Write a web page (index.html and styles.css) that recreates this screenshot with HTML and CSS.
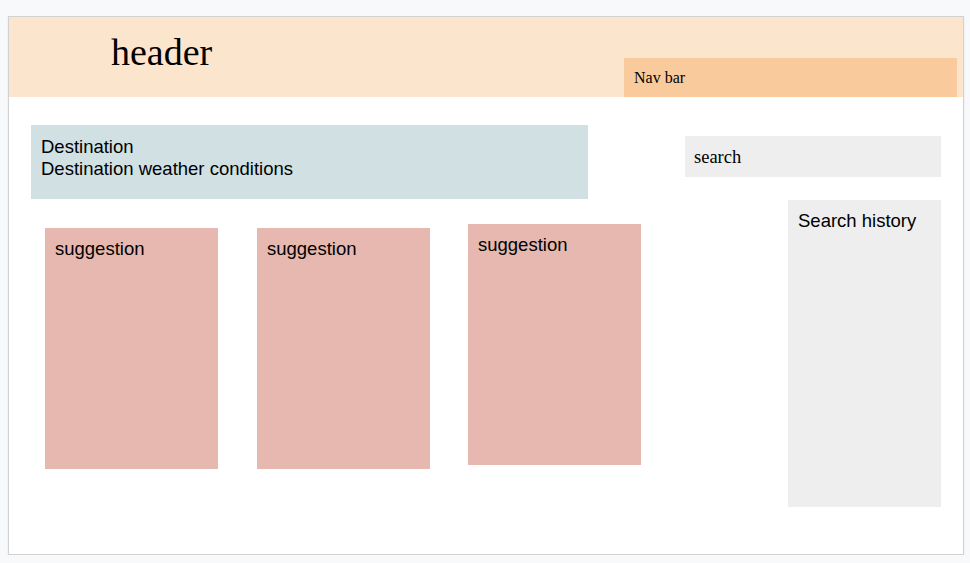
FILE: index.html
```html
<!DOCTYPE html>
<html>
<head>
<meta charset="utf-8">
<link rel="stylesheet" href="styles.css">
</head>
<body>
<div class="card">
  <header class="header">
    <div class="header-title">header</div>
    <nav class="navbar">Nav bar</nav>
  </header>
  <main class="main">
    <section class="left">
      <div class="destination">Destination<br>Destination weather conditions</div>
      <div class="suggestions">
        <div class="suggestion">suggestion</div>
        <div class="suggestion">suggestion</div>
        <div class="suggestion suggestion-raised">suggestion</div>
      </div>
    </section>
    <aside class="right">
      <div class="search">search</div>
      <div class="history">Search history</div>
    </aside>
  </main>
</div>
</body>
</html>
```
FILE: styles.css
```css
html, body {
  margin: 0;
  padding: 0;
  background: #f8f9fa;
}
body {
  padding: 16px 0 0 8px;
}
.card {
  box-sizing: border-box;
  width: 956px;
  height: 539px;
  background: #ffffff;
  border: 1px solid #d2d2d2;
  box-shadow: 0 1px 2px rgba(0, 0, 0, 0.08);
  display: flex;
  flex-direction: column;
}
.header {
  height: 80px;
  background: #fce5cd;
  display: flex;
  justify-content: space-between;
  align-items: flex-start;
}
.header-title {
  font-family: "Liberation Serif", "Times New Roman", serif;
  font-size: 38px;
  line-height: 42px;
  padding: 14px 0 0 102px;
  color: #000;
}
.navbar {
  align-self: flex-end;
  box-sizing: border-box;
  width: 333px;
  height: 39px;
  margin-right: 6px;
  background: #f9cb9c;
  font-family: "Liberation Serif", "Times New Roman", serif;
  font-size: 16px;
  line-height: 18px;
  padding: 11px 10px 0 10px;
  color: #000;
}
.main {
  display: flex;
  justify-content: space-between;
  align-items: flex-start;
  padding: 28px 22px 0 22px;
  font-family: "Liberation Sans", Arial, sans-serif;
  font-size: 18.5px;
  line-height: 22px;
  color: #000;
}
.left {
  width: 610px;
}
.destination {
  box-sizing: border-box;
  width: 557px;
  height: 74px;
  background: #d0e0e3;
  padding: 11px 10px 0 10px;
}
.suggestions {
  display: flex;
  gap: 39px;
  align-items: flex-start;
  padding-left: 14px;
  margin-top: 29px;
}
.suggestion {
  box-sizing: border-box;
  width: 173px;
  height: 241px;
  background: #e6b8af;
  padding: 10px 10px 0 10px;
}
.suggestion-raised {
  margin-top: -4px;
  margin-left: -1px;
}
.right {
  width: 256px;
  margin-top: 11px;
  display: flex;
  flex-direction: column;
}
.search {
  box-sizing: border-box;
  height: 41px;
  background: #eeeeee;
  font-family: "Liberation Serif", "Times New Roman", serif;
  font-size: 18.5px;
  line-height: 21px;
  padding: 11px 9px 0 9px;
}
.history {
  box-sizing: border-box;
  width: 153px;
  height: 307px;
  margin-top: 23px;
  align-self: flex-end;
  background: #eeeeee;
  padding: 10px 10px 0 10px;
}
```
